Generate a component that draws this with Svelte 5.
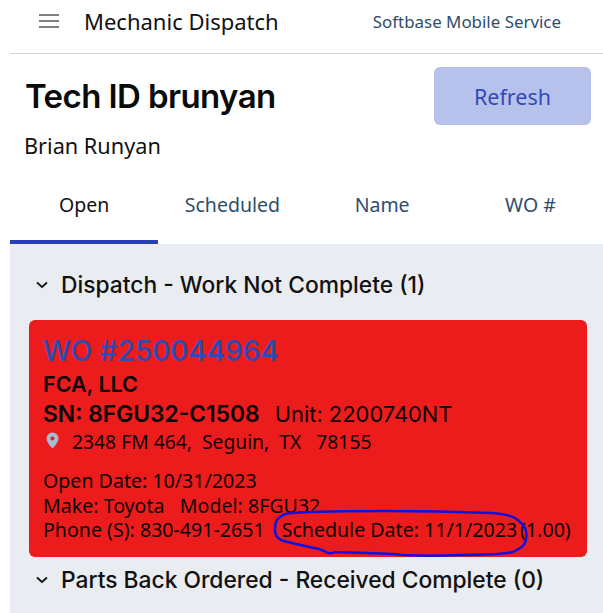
<script>
    const tabs = ["Open", "Scheduled", "Name", "WO #"];
    let active = 0;
</script>

<div class="page">
    <header class="topbar">
        <svg class="menu" width="20" height="14" viewBox="0 0 20 14">
            <path d="M0 1h20M0 7h20M0 13h20" stroke="#555" stroke-width="1.6" fill="none"/>
        </svg>
        <span class="app-title">Mechanic Dispatch</span>
        <span class="company">Softbase Mobile Service</span>
    </header>

    <section class="tech">
        <div class="tech-text">
            <h1>Tech ID brunyan</h1>
            <p>Brian Runyan</p>
        </div>
        <button class="refresh">Refresh</button>
    </section>

    <nav class="tabs">
        {#each tabs as tab, i}
            <div class="tab" class:active={i === active}>{tab}</div>
        {/each}
    </nav>

    <main class="panel">
        <div class="group-head">
            <svg class="chev" width="12" height="8" viewBox="0 0 12 8">
                <path d="M1 1.5l5 4.5 5-4.5" stroke="#111" stroke-width="1.8" fill="none"/>
            </svg>
            <span>Dispatch - Work Not Complete (1)</span>
        </div>

        <article class="card">
            <div class="wo">WO #250044964</div>
            <div class="customer">FCA, LLC</div>
            <div class="serial"><b>SN: 8FGU32-C1508</b><span>Unit: 2200740NT</span></div>
            <div class="address">
                <svg width="13" height="17" viewBox="0 0 13 17">
                    <path fill-rule="evenodd" d="M6.5 0.5a6 6 0 0 1 6 6c0 3.6-3.6 7.4-6 10-2.4-2.6-6-6.4-6-10a6 6 0 0 1 6-6zm0 4a2 2 0 1 0 0 4 2 2 0 0 0 0-4z" fill="#a3bdd3"/>
                </svg>
                <span>2348 FM 464,&nbsp; Seguin,&nbsp; TX&nbsp;&nbsp; 78155</span>
            </div>
            <div class="details">
                <div>Open Date: 10/31/2023</div>
                <div>Make: Toyota &nbsp; Model: 8FGU32</div>
                <div class="phone-line">
                    <span>Phone (S): 830-491-2651</span>
                    <span class="scheduled">Schedule Date: 11/1/2023</span>
                    <span class="qty">(1.00)</span>
                </div>
            </div>
            <!-- hand drawn markup from the screenshot -->
            <svg class="scribble" width="603" height="613" viewBox="0 0 603 613">
                <path d="M277 520C281 515 286 513 292 513C325 511 360 511 385 511C425 511 465 512 492 513C503 514 510 515 515 518C521 522 525 526 526 531C527 536 526 540 525 543C523 547 519 549 515 551C510 554 490 555 461 555C440 556 420 556 404 555C385 553 360 553 335 552C333 553 331 554 328 553C324 551 322 550 319 549C305 546 290 543 281 540C276 537 275 534 275 531C275 526 275 523 277 520Z" fill="none" stroke="#0a12e6" stroke-width="2.5"/>
            </svg>
        </article>

        <div class="group-head second">
            <svg class="chev" width="12" height="8" viewBox="0 0 12 8">
                <path d="M1 1.5l5 4.5 5-4.5" stroke="#111" stroke-width="1.8" fill="none"/>
            </svg>
            <span>Parts Back Ordered - Received Complete (0)</span>
        </div>
    </main>
</div>

<style>
    :global(body) {
        margin: 0;
        background: #fff;
    }
    .page {
        width: 603px;
        height: 613px;
        overflow: hidden;
        padding-left: 10px;
        box-sizing: border-box;
        font-family: "Noto Sans", sans-serif;
        display: flex;
        flex-direction: column;
    }
    .topbar {
        height: 54px;
        flex: none;
        box-sizing: border-box;
        border-bottom: 1px solid #d4d4d4;
        display: flex;
        align-items: center;
        padding: 0 42px 11px 29px;
    }
    .menu {
        margin-right: 25px;
        margin-top: -1px;
    }
    .app-title {
        font-size: 22px;
        color: #111;
    }
    .company {
        margin-left: auto;
        font-size: 16.9px;
        color: #2f4d6b;
    }
    .tech {
        flex: none;
        height: 120px;
        display: flex;
        justify-content: space-between;
        padding: 13px 12px 0 15px;
        box-sizing: border-box;
    }
    .tech h1 {
        margin: 7px 0 0;
        font: 600 33px/44px Inter, sans-serif;
        letter-spacing: -0.6px;
        color: #0b0b0b;
    }
    .tech p {
        margin: 14px 0 0 -1px;
        font-size: 21.7px;
        line-height: 28px;
        color: #111;
    }
    .refresh {
        width: 157px;
        height: 58px;
        border: none;
        border-radius: 6px;
        background: #b7c2ec;
        color: #3349b8;
        font: 21.5px "Noto Sans", sans-serif;
    }
    .tabs {
        flex: none;
        height: 70px;
        display: grid;
        grid-template-columns: repeat(4, 1fr);
        width: 593px;
    }
    .tab {
        text-align: center;
        font-size: 19.5px;
        line-height: 62px;
        color: #2f4d6b;
        box-sizing: border-box;
    }
    .tab:nth-child(n+3) {
        padding-left: 3px;
    }
    .tab.active {
        color: #111;
        border-bottom: 4px solid #2740b4;
    }
    .panel {
        flex: 1;
        background: #e9ecf0;
        padding: 0 16px 0 19px;
    }
    .group-head {
        display: flex;
        align-items: center;
        height: 76px;
        padding-top: 5px;
        box-sizing: border-box;
        font: 500 22.8px Inter, sans-serif;
        color: #111;
    }
    .chev {
        margin: 0 13px 0 7px;
    }
    .group-head.second {
        height: 50px;
        padding-top: 0;
        padding-bottom: 5px;
    }
    .card {
        height: 237px;
        background: #ed1c1c;
        border-radius: 6px;
        padding: 13px 15px 0 14px;
        box-sizing: border-box;
        color: #0c0505;
    }
    .wo {
        font: 500 28px/37px Inter, sans-serif;
        color: #2f4ab8;
    }
    .customer {
        font: 600 21.5px/29px Inter, sans-serif;
    }
    .serial {
        font: 22.8px/29px Inter, sans-serif;
    }
    .serial b {
        font-weight: 600;
        margin-right: 15px;
    }
    .serial span {
        font-size: 21.9px;
    }
    .address {
        display: flex;
        align-items: center;
        gap: 13px;
        font-size: 19.3px;
        line-height: 26px;
        padding-left: 3px;
    }
    .address svg {
        margin-top: -4px;
    }
    .details {
        margin-top: 14px;
        font-size: 19.6px;
        line-height: 24.5px;
        white-space: nowrap;
    }
    .phone-line {
        display: flex;
    }
    .scheduled {
        margin-left: 17px;
    }
    .qty {
        margin-left: 3px;
    }
    .scribble {
        position: absolute;
        top: 0;
        left: 0;
        pointer-events: none;
    }
</style>
